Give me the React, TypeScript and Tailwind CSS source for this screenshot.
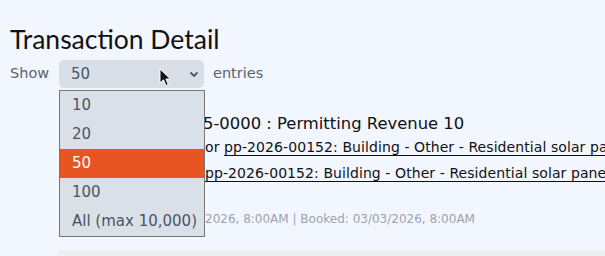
import { JSX } from "react";

const options = ["10", "20", "50", "100", "All (max 10,000)"];

const Cursor = (): JSX.Element => (
  <svg
    className="absolute left-[159px] top-[68px]"
    width="14"
    height="20"
    viewBox="0 0 14 20"
  >
    <path
      d="M1 1 L1 15 L4.5 11.8 L7 17.5 L9.3 16.5 L6.9 11 L11.5 11 Z"
      fill="#111"
      stroke="#fff"
      strokeWidth="1"
      strokeLinejoin="round"
    />
  </svg>
);

// hidden prefix sits under the open dropdown, the rest lines up after it
const Hidden = ({ w, children }: { w: string; children: string }): JSX.Element => (
  <span className={`inline-block overflow-hidden text-right align-bottom ${w}`}>
    {children}
  </span>
);

export default function App(): JSX.Element {
  return (
    <div className="relative w-[605px] h-[256px] overflow-hidden bg-[#f2f6ff] font-['DejaVu_Sans',sans-serif]">
      <div className="pl-[10px] pt-[22px]">
        <h1 className="text-[26.5px] leading-[34px] text-[#111] font-['Lato',sans-serif]">
          Transaction Detail
        </h1>
        {/* show entries */}
        <div className="flex items-center mt-[4px] h-[28px] text-[14.5px] text-[#5b6270]">
          <span className="w-[49px]">Show</span>
          <div className="relative">
            <div className="w-[145px] h-[28px] rounded-[5px] bg-[#d9dfe7] flex items-center justify-between pl-[12px] pr-[4px] text-[15px] text-[#4b5563]">
              <span>50</span>
              <svg width="12" height="12" viewBox="0 0 12 12">
                <path
                  d="M2.5 4.5 L6 8 L9.5 4.5"
                  fill="none"
                  stroke="#4b5563"
                  strokeWidth="1.8"
                />
              </svg>
            </div>
            {/* open dropdown */}
            <ul className="absolute z-10 left-0 top-[30px] w-[146px] border border-[#777] bg-[#dae0e8] text-[15px] text-[#4b5563]">
              {options.map((o) => (
                <li
                  key={o}
                  className={`h-[29px] flex items-center pl-[12px] ${
                    o === "50" ? "bg-[#e85522] text-white" : ""
                  }`}
                >
                  {o}
                </li>
              ))}
            </ul>
          </div>
          <span className="ml-[9px]">entries</span>
        </div>
        {/* first row */}
        <div className="ml-[60px] mt-[24px] whitespace-nowrap text-[#111]">
          <div className="text-[16.4px] leading-[24px]">
            <Hidden w="w-[133px]">100-412</Hidden>5-0000 : Permitting Revenue 10
          </div>
          <div className="text-[14px] leading-[24px] tracking-[0.08px] -mt-[1px]">
            <Hidden w="w-[135px]">Fee f</Hidden>or{" "}
            <span className="underline underline-offset-[3px]">
              pp-2026-00152: Building - Other - Residential solar panels
            </span>
          </div>
          <div className="text-[14px] leading-[24px] tracking-[0.08px] mt-[2px]">
            <Hidden w="w-[135px]">Ref: </Hidden>
            <span className="underline underline-offset-[3px]">
              pp-2026-00152: Building - Other - Residential solar panels
            </span>
          </div>
          <div className="text-[12px] leading-[20px] mt-[24px] text-[#9ca3af]">
            <Hidden w="w-[135px]">Posted: 03/03/</Hidden>2026, 8:00AM | Booked: 03/03/2026, 8:00AM
          </div>
        </div>
      </div>
      <div className="ml-[58px] mt-[21px] h-[20px] bg-[#eceef1]" />
      <Cursor />
    </div>
  );
}
